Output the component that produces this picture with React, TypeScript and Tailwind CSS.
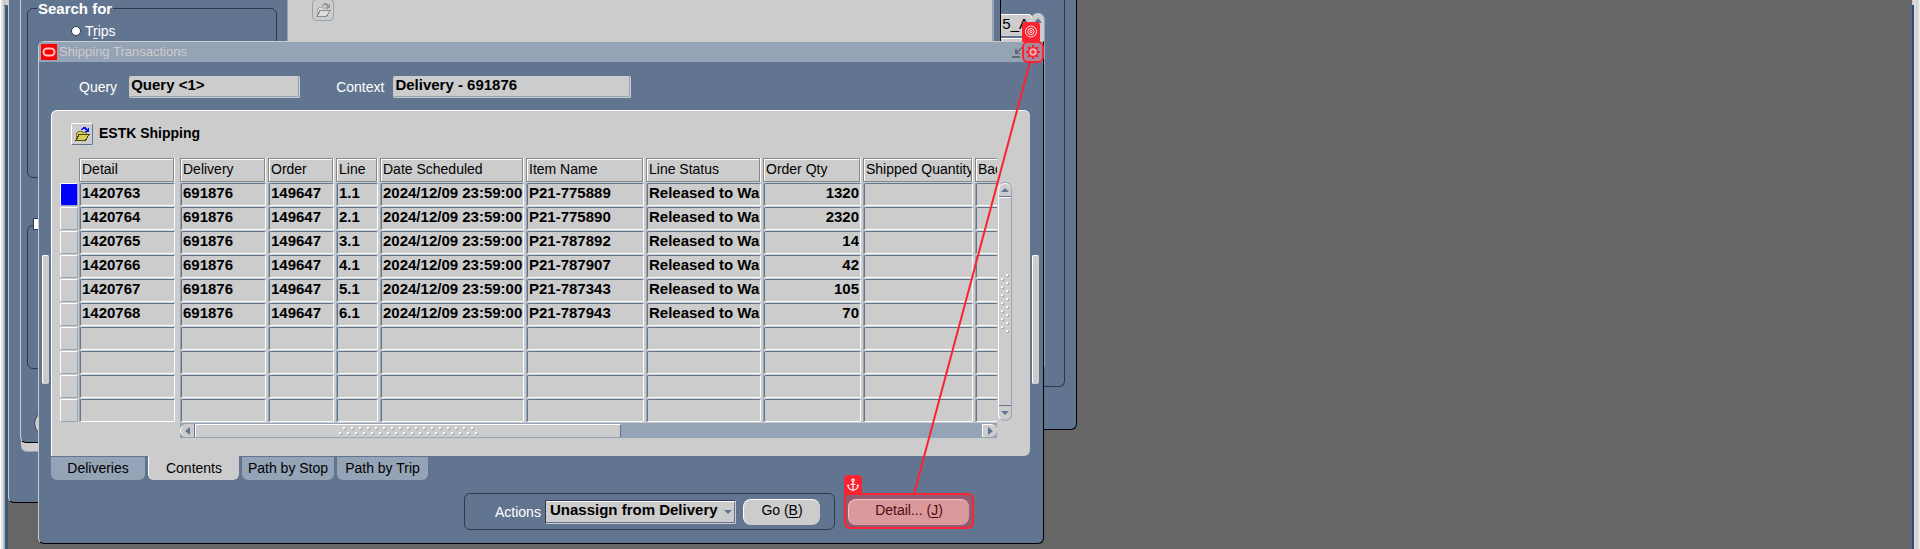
import type { ReactNode } from "react";
import { Anchor } from "lucide-react";

const columns = [
  { name: "Detail", width: 101 },
  { name: "Delivery", width: 88 },
  { name: "Order", width: 68 },
  { name: "Line", width: 44 },
  { name: "Date Scheduled", width: 146 },
  { name: "Item Name", width: 120 },
  { name: "Line Status", width: 117 },
  { name: "Order Qty", width: 100 },
  { name: "Shipped Quantity", width: 112 },
  { name: "Backordered", width: 80 },
];

const date = "2024/12/09 23:59:00";
const status = "Released to Warehouse";
const rows: string[][] = [
  ["1420763", "691876", "149647", "1.1", date, "P21-775889", status, "1320", "", ""],
  ["1420764", "691876", "149647", "2.1", date, "P21-775890", status, "2320", "", ""],
  ["1420765", "691876", "149647", "3.1", date, "P21-787892", status, "14", "", ""],
  ["1420766", "691876", "149647", "4.1", date, "P21-787907", status, "42", "", ""],
  ["1420767", "691876", "149647", "5.1", date, "P21-787343", status, "105", "", ""],
  ["1420768", "691876", "149647", "6.1", date, "P21-787943", status, "70", "", ""],
  ["", "", "", "", "", "", "", "", "", ""],
  ["", "", "", "", "", "", "", "", "", ""],
  ["", "", "", "", "", "", "", "", "", ""],
  ["", "", "", "", "", "", "", "", "", ""],
];

function FolderIcon({ muted = false }: { muted?: boolean }) {
  const body = muted ? "#dddddd" : "#d8cc58";
  const line = muted ? "#8c8c8c" : "#4a4508";
  const arrow = muted ? "#999999" : "#0a14ff";
  return (
    <svg width="16" height="16" viewBox="0 0 16 16" shapeRendering="crispEdges" aria-hidden="true">
      <path d="M2 14V7H3V6H4V5H8V6H12V9" fill={body} stroke={line} strokeWidth="0.6" />
      <path d="M2 14.500L5 8.500H15L11.500 14.500Z" fill={body} stroke={line} />
      <path d="M7 3H8V2H9V1H12V2H13V3H14V2H15V6H11V5H12V4H11V3H9V4H7Z" fill={arrow} />
    </svg>
  );
}

function ScrollArrow({ d }: { d: string }) {
  return (
    <svg width="8" height="8" viewBox="0 0 8 8" aria-hidden="true">
      <path d={d} fill="#627590" />
    </svg>
  );
}

function Grip({ vertical = false }: { vertical?: boolean }) {
  const id = vertical ? "grip-v" : "grip-h";
  return (
    <svg
      width={vertical ? 10 : 140}
      height={vertical ? 60 : 10}
      shapeRendering="crispEdges"
      aria-hidden="true"
    >
      <defs>
        <pattern
          id={id}
          width={vertical ? 10 : 8}
          height={vertical ? 8 : 10}
          patternUnits="userSpaceOnUse"
        >
          <path d={vertical ? "M6 1h2v2h-2zM1 5h2v2h-2z" : "M5 1h2v2h-2zM1 6h2v2h-2z"} fill="#fff" />
          <path
            d={vertical ? "M8 2h1v2h-2v-1h1zM3 6h1v2h-2v-1h1z" : "M7 2h1v2h-2v-1h1zM3 7h1v2h-2v-1h1z"}
            fill="#95a3b7"
          />
        </pattern>
      </defs>
      <rect width="100%" height="100%" fill={`url(#${id})`} />
    </svg>
  );
}

function Background() {
  return (
    <>
      <section className="absolute -top-2 left-0 h-[511px] w-[980px] rounded-bl-md border-b border-l border-b-black border-l-[#cccccc] bg-[#627590]" />
      <section className="absolute -top-2 left-[900px] h-[438px] w-[169px] rounded-br-md border-r border-b border-black bg-[#627590]">
        <div className="mr-[11px] h-[395px] rounded-br-md border-r border-b border-[#2b3a50]" />
        <span className="absolute top-[22px] left-[85px] h-[22px] w-[39px] rounded-sm border-t border-r border-white bg-[#cccccc] pr-[2px] text-right text-[15px] leading-[18px] text-black">
          5_A
        </span>
        <span className="absolute top-[46px] left-[85px] h-2 w-[39px] border-t border-white bg-[#cccccc]" />
        <span className="absolute top-[21px] left-[123px] flex h-[354px] w-[14px] flex-col items-center rounded-t-full border-r border-[#95a3b7] bg-[#cccccc] pt-1">
          <ScrollArrow d="M4 1L8 6H0Z" />
        </span>
      </section>
      <div className="absolute top-[380px] left-[13px] h-[72px] w-[200px] rounded-bl-md border-b border-[#95a3b7] bg-[#cccccc]" />
      <section className="absolute -top-2 left-3 h-[451px] w-[981px] rounded-bl-md border-r border-b border-l border-black border-l-[#cccccc] bg-[#627590]">
        <div
          role="radiogroup"
          aria-labelledby="search-for"
          className="absolute top-4 left-[6px] h-[170px] w-[250px] rounded-md border border-[#2b3a50] px-[9px] text-[14px] text-white"
        >
          <h2 id="search-for" className="-mt-2 w-fit bg-[#627590] px-px text-[15px] leading-4 font-bold">
            Search for
          </h2>
          <label className="mt-1 ml-[34px] flex items-center gap-1 leading-5">
            <input
              type="radio"
              name="search"
              defaultChecked
              className="size-[10px] appearance-none rounded-full border border-[#2b3a50] bg-white"
            />
            <span>
              T<u className="underline-offset-2">r</u>ips
            </span>
          </label>
        </div>
        <div className="absolute top-[233px] left-[6px] h-[144px] w-[250px] rounded-md border border-[#2b3a50]" />
        <input
          type="checkbox"
          aria-label="Advanced search"
          className="absolute top-[226px] left-3 h-[12px] w-[12px] appearance-none border border-[#2b3a50] bg-white"
        />
        <button
          type="button"
          aria-label="Clear"
          className="absolute top-[419px] left-[13px] h-[25px] w-[80px] rounded-full border border-[#2b3a50] bg-[#cccccc]"
        />
        <div className="absolute top-0 left-[266px] h-[120px] w-[707px] border-r-2 border-l border-[#95a3b7] bg-[#cccccc]">
          <button
            type="button"
            aria-label="Open folder"
            disabled
            className="mt-[7px] ml-6 flex h-[22px] w-[22px] items-center justify-center rounded-sm border border-[#95a3b7]"
          >
            <FolderIcon muted />
          </button>
        </div>
      </section>
    </>
  );
}

function Field({ id, label, value, className }: { id: string; label: string; value: string; className: string }) {
  return (
    <>
      <label htmlFor={id} className="pt-[3px] text-[14px] leading-4 text-white">
        {label}
      </label>
      <input
        id={id}
        readOnly
        defaultValue={value}
        className={`h-[22px] rounded-xs border-r border-b border-[#cccccc] bg-[#cccccc] px-0.5 pb-1 text-[15px] leading-4 font-bold text-black shadow-[inset_-1px_-1px_0_#95a3b7] outline-none ${className}`}
      />
    </>
  );
}

function DetailsTable() {
  return (
    <table className="w-[995px] table-fixed border-collapse">
      <colgroup>
        <col style={{ width: 19 }} />
        {columns.map((c) => (
          <col key={c.name} style={{ width: c.width }} />
        ))}
      </colgroup>
      <thead>
        <tr className="h-[25px] align-top">
          <td />
          {columns.map((c, i) => (
            <th key={c.name} scope="col" className={`p-0 text-left font-normal ${i === 0 ? "pr-[5px]" : "pr-[2px]"}`}>
              <div className="h-6 border-r border-white">
                <div className="h-6 overflow-hidden border border-[#888888] pl-0.5 text-[14px] leading-5 whitespace-nowrap shadow-[inset_1px_1px_0_#ffffff]">
                  {c.name}
                </div>
              </div>
            </th>
          ))}
        </tr>
      </thead>
      <tbody>
        {rows.map((row, r) => (
          <tr key={r} className="h-6">
            <td className="p-0 align-top">
              <button
                type="button"
                aria-label={`Select row ${r + 1}`}
                className={`block h-[23px] w-[18px] rounded-xs border border-t-white border-r-[#95a3b7] border-b-[#95a3b7] border-l-white ${r === 0 ? "bg-[#0000ff]" : "bg-[#cccccc]"}`}
              />
            </td>
            {row.map((value, c) => (
              <td key={c} className={`p-0 align-top ${c === 0 ? "pr-[5px]" : "pr-[2px]"}`}>
                <div className="h-[23px] border-l border-[#95a3b7]">
                  <input
                    aria-label={`${columns[c].name} ${r + 1}`}
                    defaultValue={value}
                    className={`block h-[23px] w-full rounded-xs border border-t-[#627590] border-r-white border-b-white border-l-[#627590] bg-[#cccccc] pb-1 text-[15px] leading-4 font-bold text-black outline-none ${c === 7 ? "pr-px text-right" : "pl-px"}`}
                  />
                </div>
              </td>
            ))}
          </tr>
        ))}
      </tbody>
    </table>
  );
}

function Tab({ children, active = false, className }: { children: ReactNode; active?: boolean; className: string }) {
  return (
    <button
      type="button"
      role="tab"
      aria-selected={active}
      className={`h-6 rounded-b-md border-t pb-0.5 text-[14px] leading-5 whitespace-nowrap text-black ${active ? "border-l border-t-[#cccccc] border-l-white bg-[#cccccc]" : "border-t-[#627590] bg-[#95a3b7]"} ${className}`}
    >
      {children}
    </button>
  );
}

function ShippingWindow() {
  return (
    <main className="absolute top-[41px] left-[30px] w-[1006px] rounded-md rounded-tr-none border border-t-[#cccccc] border-r-black border-b-black border-l-[#cccccc] bg-[#627590]">
      <header className="flex h-5 items-center bg-[#95a3b7] pl-0.5">
        <svg width="16" height="16" viewBox="0 0 16 16" aria-hidden="true">
          <rect width="16" height="16" fill="#ff0000" />
          <rect x="2.5" y="4.5" width="11" height="7" rx="3.5" fill="none" stroke="#ffc4c4" strokeWidth="2" />
        </svg>
        <h1 className="ml-0.5 text-[13px] leading-5 text-[#cccccc]">Shipping Transactions</h1>
        <svg className="mr-[20px] ml-auto" width="12" height="12" viewBox="0 0 12 12" shapeRendering="crispEdges" aria-hidden="true">
          <path d="M1 10h8v2H1zM4 3h2v2h1V4h1V3h1V2h1V1h2v1h-1v1h-1v1H9v1H8v1H7v1h2v1H4z" fill="#666666" />
        </svg>
      </header>

      <div className="flex pt-[14px] pl-10">
        <Field id="query" label="Query" value="Query <1>" className="mr-[36px] ml-3 w-[171px]" />
        <Field id="context" label="Context" value="Delivery - 691876" className="ml-[9px] w-[238px]" />
      </div>

      <div className="mt-3 flex gap-[2px] px-[3px]">
        <div className="mt-[145px] h-[129px] w-[7px] rounded-xs border-t border-l border-white bg-[#cccccc]" />
        <section className="min-w-0 flex-1 rounded-md rounded-bl-none border-t border-l border-white bg-[#cccccc] pt-3 pb-[18px] pl-2">
          <div className="flex items-center gap-[6px] pl-[11px]">
            <button
              type="button"
              aria-label="Open folder"
              className="flex h-[22px] w-[22px] items-center justify-center rounded-xs border border-t-white border-r-[#627590] border-b-[#627590] border-l-white"
            >
              <FolderIcon />
            </button>
            <h2 className="pb-0.5 text-[14px] leading-5 font-bold text-black">ESTK Shipping</h2>
          </div>
          <div className="mt-[13px] flex">
            <div className="w-[937px] overflow-hidden">
              <DetailsTable />
              <div className="ml-[120px] flex h-[15px] border-y border-[#95a3b7] bg-[#95a3b7]">
                <button
                  type="button"
                  aria-label="Scroll left"
                  className="flex w-[15px] items-center justify-center rounded-l-full border-r border-l border-r-[#627590] border-l-white bg-[#cccccc]"
                >
                  <ScrollArrow d="M1 4L6 0V8Z" />
                </button>
                <div className="flex w-[426px] items-center border-t border-r border-l border-white border-r-[#627590] bg-[#cccccc] pl-[142px]">
                  <Grip />
                </div>
                <button
                  type="button"
                  aria-label="Scroll right"
                  className="ml-auto flex w-[15px] items-center justify-center rounded-r-full border-t border-l border-white bg-[#cccccc]"
                >
                  <ScrollArrow d="M7 4L2 0V8Z" />
                </button>
              </div>
            </div>
            <div className="mt-6 ml-px flex h-[239px] w-[14px] flex-col rounded-full border border-[#95a3b7] border-l-white bg-[#cccccc]">
              <button
                type="button"
                aria-label="Scroll up"
                className="flex h-[14px] items-center justify-center rounded-t-full border-t border-b border-t-white border-b-[#627590]"
              >
                <ScrollArrow d="M4 2L8 6H0Z" />
              </button>
              <div className="flex flex-1 items-center justify-center overflow-hidden border-t border-white pt-[54px]">
                <div className="h-[111px]">
                  <Grip vertical />
                </div>
              </div>
              <button
                type="button"
                aria-label="Scroll down"
                className="flex h-[15px] items-center justify-center border-t border-[#627590]"
              >
                <ScrollArrow d="M0 2H8L4 6Z" />
              </button>
            </div>
          </div>
        </section>
        <div className="mt-[145px] mr-px h-[129px] w-[7px] rounded-xs border-t border-l border-white bg-[#cccccc]" />
      </div>

      <div role="tablist" className="flex gap-[3px] pl-3">
        <Tab className="w-[94px]">Deliveries</Tab>
        <Tab active className="w-[91px]">
          Contents
        </Tab>
        <Tab className="w-[92px]">Path by Stop</Tab>
        <Tab className="w-[91px]">Path by Trip</Tab>
      </div>

      <div className="mt-[13px] mb-[13px] flex items-center pl-[425px]">
        <div className="flex h-[37px] w-[371px] items-center rounded-md border border-[#2b3a50] pl-[30px]">
          <label htmlFor="actions" className="w-[50px] text-[14px] leading-5 text-white">
            Actions
          </label>
          <div className="relative flex">
            <select
              id="actions"
              className="h-[24px] w-[191px] appearance-none rounded-xs border border-[#2b3a50] border-r-[#cccccc] border-b-[#cccccc] bg-[#cccccc] pb-1 pl-1 text-[15px] leading-4 font-bold text-black shadow-[inset_0_1px_0_#ffffff,inset_-1px_-1px_0_#627590]"
            >
              <option>Unassign from Delivery</option>
            </select>
            <svg className="pointer-events-none absolute top-[10px] right-[4px]" width="8" height="4" viewBox="0 0 8 4" aria-hidden="true">
              <path d="M0 0H8L4 4Z" fill="#627590" />
            </svg>
          </div>
          <button
            type="button"
            className="ml-[7px] h-[26px] w-[77px] rounded-lg border-t border-l border-white bg-[#cccccc] pb-1 text-[14px] leading-5 text-black"
          >
            Go (<u className="underline-offset-2">B</u>)
          </button>
        </div>
        <button
          type="button"
          className="ml-[13px] h-[26px] w-[121px] rounded-lg border-t border-l border-white bg-[#cccccc] pb-1 text-[14px] leading-5 text-black"
        >
          Detail... (<u className="underline-offset-2">J</u>)
        </button>
      </div>
    </main>
  );
}

function Annotations() {
  return (
    <>
      <svg className="pointer-events-none absolute top-0 left-0" width="1060" height="549" viewBox="0 0 1060 549" aria-hidden="true">
        <path d="M906 494L1022 62" stroke="#fb2330" strokeWidth="2" fill="none" />
      </svg>
      <div className="pointer-events-none absolute top-[41px] left-[1014px] flex h-[22px] w-[22px] items-center justify-center rounded-md border-2 border-[#fb2330] bg-[#a7899c]">
        <svg width="16" height="16" viewBox="0 0 16 16" fill="none" stroke="#fb2330" aria-hidden="true">
          <circle cx="8" cy="8" r="4.5" strokeWidth="1.5" fill="#e6b3bd" />
          <circle cx="8" cy="8" r="1.8" fill="#fb2330" stroke="none" />
          <path
            d="M8 1v2.500M8 12.500V15M1 8h2.500M12.500 8H15M3 3l1.800 1.800M11.200 11.200L13 13M13 3l-1.800 1.800M4.800 11.200L3 13"
            strokeWidth="2"
          />
        </svg>
      </div>
      <div className="pointer-events-none absolute top-[22px] left-[1014px] flex h-5 w-[18px] items-center justify-center rounded-t-sm bg-[#fb2330]">
        <svg width="14" height="14" viewBox="0 0 14 14" fill="none" stroke="#ffd9dc" aria-hidden="true">
          <circle cx="7" cy="6.500" r="5.500" />
          <circle cx="7" cy="6.500" r="3.200" />
          <circle cx="7" cy="6.500" r="1.200" />
        </svg>
      </div>
      <div className="pointer-events-none absolute top-[493px] left-[836px] h-[36px] w-[130px] rounded-md rounded-tl-none border-2 border-[#fb2330] bg-[#fb2330]/30" />
      <div className="pointer-events-none absolute top-[475px] left-[836px] flex h-[19px] w-[18px] items-center justify-center rounded-t-sm bg-[#fb2330] text-white">
        <Anchor size={14} strokeWidth={2} aria-hidden="true" />
      </div>
    </>
  );
}

export default function App() {
  return (
    <div className="flex h-screen min-h-[549px] w-full overflow-hidden bg-[#666666] font-['Liberation_Sans',Arial,sans-serif]">
      <div className="flex w-2 shrink-0 flex-col bg-[linear-gradient(to_right,#ffffff_1px,#e6e8e8_1px,#dcdfe0_3px,#b8b8b8_4px,#d0d0d0_5px)]">
        <div className="mt-[5px] ml-1 flex-1 border-t border-[#666666] bg-[linear-gradient(to_right,#aaaaaa_1px,#55606c_1px,#245a8c_3px,#46586e_4px)]" />
      </div>
      <div className="relative min-w-0 flex-1 overflow-hidden">
        <Background />
        <ShippingWindow />
        <Annotations />
      </div>
      <div className="flex w-2 shrink-0 flex-col bg-[linear-gradient(to_right,#d0d0d0_2px,#f0f0f0_3px,#c8c8c8_4px,#dddddd_6px,#eeeeee_8px)]">
        <div className="mt-[5px] mr-[6px] flex-1 bg-[#245080]" />
      </div>
    </div>
  );
}
